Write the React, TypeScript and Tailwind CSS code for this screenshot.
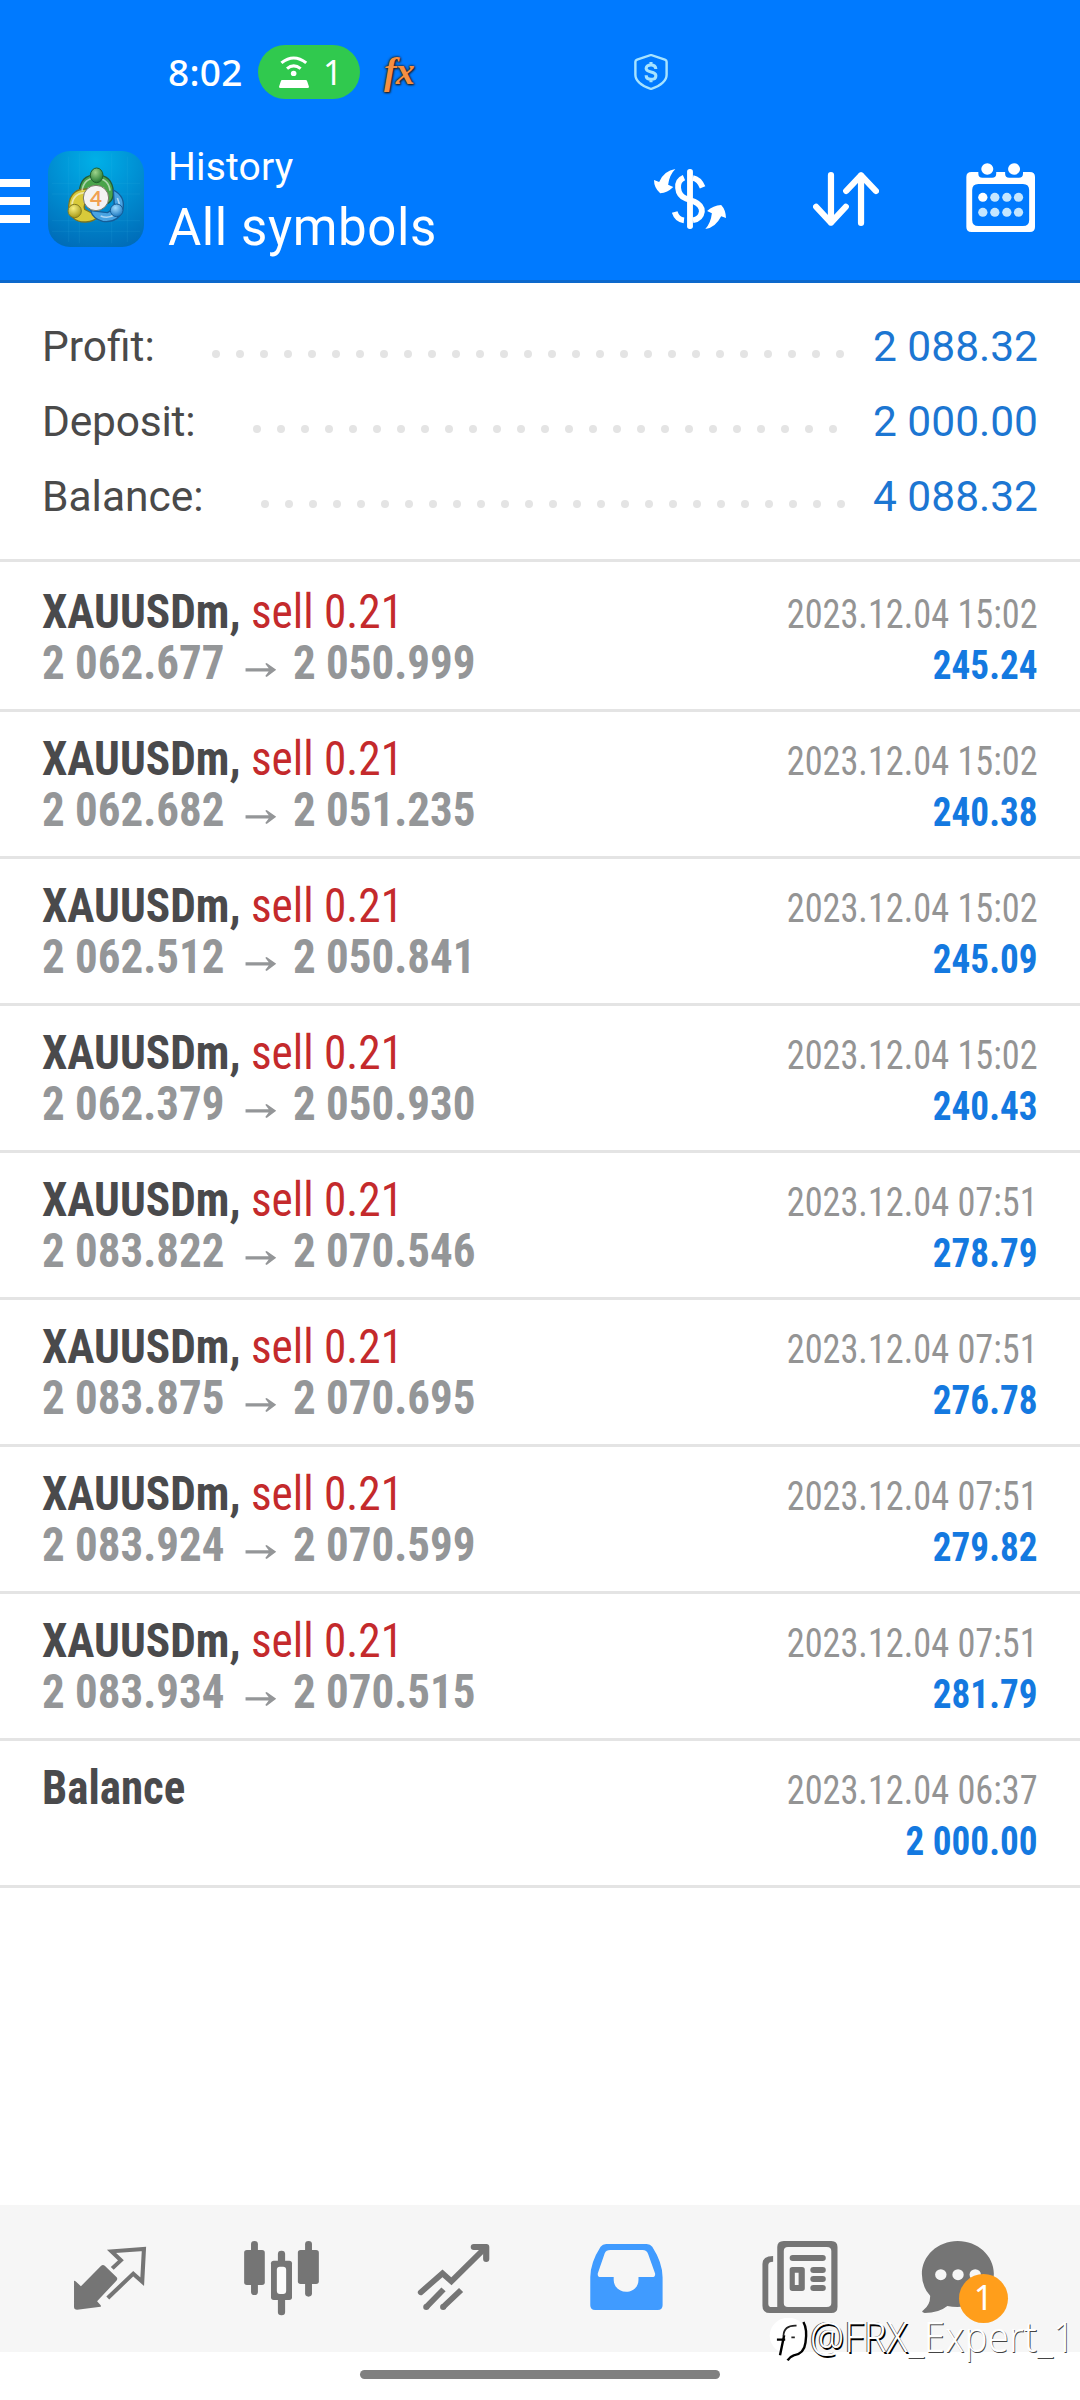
const NAV = ['trade', 'quotes', 'chart', 'history', 'news', 'chat'] as const;

const ROWS = [
  ['2 062.677', '2 050.999', '15:02', '245.24'],
  ['2 062.682', '2 051.235', '15:02', '240.38'],
  ['2 062.512', '2 050.841', '15:02', '245.09'],
  ['2 062.379', '2 050.930', '15:02', '240.43'],
  ['2 083.822', '2 070.546', '07:51', '278.79'],
  ['2 083.875', '2 070.695', '07:51', '276.78'],
  ['2 083.924', '2 070.599', '07:51', '279.82'],
  ['2 083.934', '2 070.515', '07:51', '281.79'],
];

function StatusBar() {
  return (
    <div className="flex h-[145px] items-start text-white">
      <div className="mt-[47px] ml-[168px] w-[90px] font-['Noto_Sans'] text-[37px] leading-[50px] font-medium tracking-[0.3px]">8:02</div>
      <div className="mt-[45px] flex h-[54px] w-[102px] items-center rounded-full bg-[#30c94e] pl-[21px]">
        <svg className="h-[32px] w-[30px]" viewBox="811 75 86 97" preserveAspectRatio="none" fill="none" stroke="white" strokeWidth="9">
          <path d="M818 96Q853 66 889 96M834 113Q853 97 873 113" />
          <circle cx="853" cy="128" r="8" fill="white" stroke="none" />
          <path d="M820 148h67q4 0 5 4l5 16q0 4-4 4h-78q-4 0-4-4l5-16q1-4 4-4z" fill="white" stroke="none" />
        </svg>
        <span className="ml-[14px] font-['Noto_Sans'] text-[34px] leading-[54px]">1</span>
      </div>
      <div className="mt-[51px] ml-[24px] w-[40px] font-['Liberation_Serif'] text-[38px] leading-[40px] font-bold tracking-[-1px] italic text-[#f58f42] [text-shadow:0_0_2px_#222,0_0_3px_#222,1px_1px_2px_#222]">fx</div>
      <svg className="mt-[54px] ml-[210px] h-[36px] w-[34px]" viewBox="273 72 98 108" preserveAspectRatio="none" fill="none" stroke="#a6e3ff" strokeWidth="7">
        <path d="M322 75l40 14q5 2 5 6v39q0 26-45 43q-45-17-45-43V95q0-4 5-6z" />
        <path d="M336 117q-1-12-14-12t-14 10q0 8 14 11t14 11q0 11-14 11t-14-12M322 96v10M322 147v10" strokeWidth="9" />
      </svg>
    </div>
  );
}

function Logo() {
  return (
    <svg className="ml-[18px] h-24 w-24" viewBox="54 63 288 288">
      <defs>
        <radialGradient id="tile" cx="0.5" cy="0.1" r="0.95">
          <stop offset="0" stopColor="#00b0e8" />
          <stop offset="0.5" stopColor="#008ed2" />
          <stop offset="1" stopColor="#006cb8" />
        </radialGradient>
        <radialGradient id="green" cx="0.4" cy="0.3" r="0.7"><stop offset="0" stopColor="#9ed48c" /><stop offset="1" stopColor="#257a32" /></radialGradient>
        <radialGradient id="gold" cx="0.4" cy="0.3" r="0.7"><stop offset="0" stopColor="#f8f080" /><stop offset="1" stopColor="#a89a18" /></radialGradient>
        <radialGradient id="sky" cx="0.4" cy="0.3" r="0.7"><stop offset="0" stopColor="#9fdcff" /><stop offset="1" stopColor="#1d78c0" /></radialGradient>
      </defs>
      <rect x="54" y="63" width="288" height="288" rx="66" fill="url(#tile)" />
      <path d="M66 160h264M66 192h264M66 272h264M66 304h264M116 80v256M148 70v270M245 70v270M292 80v256" stroke="#4cc4f0" strokeOpacity="0.16" strokeWidth="2" />
      <g stroke="#245c38" strokeWidth="4">
        <path d="M148 186q2-50 50-52q50 2 52 52q0 26-16 34l-14-36q-22-24-44-6z" fill="#4aa34a" />
        <path d="M182 178q-62-8-66 50q4 50 52 48q24-2 38-16l-42-22q-6-18 14-28z" fill="#d9ca3a" stroke="#7a7420" />
        <path d="M250 180q38 20 28 60q-14 40-60 34q-30-8-36-32l50 6q26-12 20-36z" fill="#48a3e2" stroke="#155d98" />
      </g>
      <path d="M156 182q6-38 42-38q38 2 42 38M126 224q4-36 44-36M262 204q14 28-6 48q-20 16-44 6" fill="none" stroke="white" strokeOpacity="0.55" strokeWidth="5" />
      <circle cx="198" cy="204" r="38" fill="#f4f2f2" stroke="#776" strokeWidth="3" />
      <ellipse cx="200" cy="136" rx="19" ry="22" fill="url(#green)" stroke="#20602c" strokeWidth="3" />
      <circle cx="134" cy="243" r="20" fill="url(#gold)" stroke="#847c20" strokeWidth="3" />
      <circle cx="260" cy="241" r="19" fill="url(#sky)" stroke="#155d98" strokeWidth="3" />
      <text x="198" y="227" textAnchor="middle" fontFamily="Lato" fontWeight="700" fontSize="62" fill="#f0a050">4</text>
    </svg>
  );
}

function Toolbar() {
  return (
    <div className="flex h-[138px] items-start border-b-[3px] border-[#0c68cc] text-white">
      <div className="mt-[34px] flex w-[30px] flex-col gap-[10px]">
        <div className="h-2 bg-white" />
        <div className="h-2 bg-white" />
        <div className="h-2 bg-white" />
      </div>
      <div className="mt-[6px] w-[138px]"><Logo /></div>
      <div className="w-[486px]">
        <div className="mt-[-1px] text-[39px] leading-[46px] tracking-[0.2px]">History</div>
        <div className="mt-[8px] text-[51px] leading-[60px] tracking-[0.6px]">All symbols</div>
      </div>
      <svg className="mt-[24px] h-[60px] w-[72px]" viewBox="331 417 209 180" preserveAspectRatio="none" fill="white">
        <rect x="427" y="417" width="17" height="180" rx="8" />
        <path d="M418 443Q399 451 401 474Q403 498 424 506L448 515Q471 526 470 545Q467 567 444 571M444 444Q462 447 472 472M391 546Q398 569 418 571" fill="none" stroke="white" strokeWidth="17" />
        <path d="M393 417Q360 422 346 456L331 450Q331 474 349 490Q370 488 387 471L372 464Q376 434 393 417zM480 597Q509 594 526 559L540 564Q539 539 526 525Q503 527 485 543L499 550Q496 579 480 597z" />
      </svg>
      <svg className="mt-[27px] ml-[87px] h-[54px] w-[66px]" viewBox="793 426 191 162" preserveAspectRatio="none" fill="none" stroke="white" strokeWidth="18" strokeLinecap="round" strokeLinejoin="round">
        <path d="M845 435V578M802 530l43 48 43-48M932 579V436M889 483l43-47 43 47" />
      </svg>
      <svg className="mt-[18px] ml-[87px] h-[69px] w-[69px]" viewBox="1236 399 201 207" preserveAspectRatio="none" fill="white">
        <path fillRule="evenodd" d="M1252 426h20v5q0 12 12 12h28q12 0 12-12v-5h26v5q0 12 12 12h28q12 0 12-12v-5h20q15 0 15 15v150q0 15-15 15h-170q-15 0-15-15V441q0-15 15-15zM1272 462q-18 0-18 18v90q0 18 18 18h130q18 0 18-18v-90q0-18-18-18z" />
        <circle cx="1298" cy="417" r="17.500" /><circle cx="1376" cy="417" r="17.500" />
        <circle cx="1285" cy="502" r="13.500" />
        <g fill="#c4e6ff">
          <circle cx="1320" cy="502" r="13.500" /><circle cx="1355" cy="502" r="13.500" /><circle cx="1389" cy="502" r="13.500" />
          <circle cx="1285" cy="547" r="13.500" /><circle cx="1320" cy="547" r="13.500" /><circle cx="1355" cy="547" r="13.500" /><circle cx="1389" cy="547" r="13.500" />
        </g>
      </svg>
    </div>
  );
}

function Dots({ count }: { count: number }) {
  return (
    <div className="mt-[14px] flex gap-4">
      {Array.from({ length: count }, (_, i) => <span key={i} className="size-2 rounded-full bg-[#e4e4e4]" />)}
    </div>
  );
}

function Summary() {
  return (
    <div className="h-[279px] border-b-[3px] border-[#e4e4e4] pt-[26px] text-[42.5px] text-[#4a4a4a]">
      <div className="flex h-[75px] items-center px-[42px]"><span className="w-[170px]">Profit:</span><Dots count={27} /><span className="ml-auto text-[#1c76d2]">2 088.32</span></div>
      <div className="flex h-[75px] items-center px-[42px]"><span className="w-[211px] tracking-[-0.2px]">Deposit:</span><Dots count={25} /><span className="ml-auto text-[#1c76d2]">2 000.00</span></div>
      <div className="flex h-[75px] items-center px-[42px]"><span className="w-[219px]">Balance:</span><Dots count={25} /><span className="ml-auto text-[#1c76d2]">4 088.32</span></div>
    </div>
  );
}

function Arrow() {
  return (
    <svg className="mt-[26px] mr-[18px] ml-[22px] h-[14px] w-[33px]" viewBox="710 311 90 40" preserveAspectRatio="none">
      <path d="M710 326h68l-10-13 4-2 28 19-28 21-4-3 10-13h-68z" fill="#949698" />
    </svg>
  );
}

function Stamp({ time, value }: { time: string; value: string }) {
  return (
    <div className="pt-[3px] text-right text-[40px] leading-[51px]">
      <div className="origin-right scale-x-[0.907] text-[#949494]">2023.12.04 {time}</div>
      <div className="origin-right scale-x-[0.93] font-bold text-[#1479e0]">{value}</div>
    </div>
  );
}

function Deal({ row }: { row: string[] }) {
  return (
    <div className="flex h-[147px] justify-between border-b-[3px] border-[#e4e4e4] px-[42px] pt-[21px] font-stretch-condensed">
      <div className="text-[48px] leading-[51px] whitespace-pre">
        <div className="origin-left scale-x-[0.944] text-[#c42a2c]"><b className="text-[#4a4a4c]">XAUUSDm,</b> sell 0.21</div>
        <div className="flex origin-left scale-x-[0.937] font-bold text-[#949698]">{row[0]}<Arrow />{row[1]}</div>
      </div>
      <Stamp time={row[2]} value={row[3]} />
    </div>
  );
}

function NavIcon({ name }: { name: (typeof NAV)[number] }) {
  const cls = 'h-[147px] w-[172px]';
  const g = '#757575';
  switch (name) {
    case 'trade':
      return (
        <svg className={cls} viewBox="69.7 45 499.5 441" preserveAspectRatio="none" fill="none" stroke={g} strokeWidth="12">
          <path d="M215 272q3 0 6 3l14 14 58-61q6-6 12 0l33 33q5 5 0 11l-56 62 9 10q4 4 1 6l-68 9q-9 0-9-8z" fill={g} stroke="none" />
          <path d="M326 235l25-24-27-27 94-7-5 98-26-24-74 73" />
        </svg>
      );
    case 'quotes':
      return (
        <svg className={cls} viewBox="569.2 45 499.500 441" preserveAspectRatio="none" fill={g}>
          <rect x="729" y="153" width="20" height="162" rx="10" /><rect x="709" y="180" width="60" height="105" rx="8" />
          <rect x="886" y="153" width="20" height="167" rx="10" /><rect x="865" y="180" width="61" height="102" rx="8" />
          <rect x="807" y="182" width="21" height="194" rx="10" /><rect x="787" y="212" width="61" height="118" rx="8" />
          <rect x="804" y="230" width="27" height="82" rx="9" fill="#fbfbfb" />
        </svg>
      );
    case 'chart':
      return (
        <svg className={cls} viewBox="1068.7 45 499.500 441" preserveAspectRatio="none" fill="none" stroke={g} strokeWidth="17">
          <path d="M1222 307l63-57 26 24 100-102" strokeLinecap="round" />
          <path d="M1376 171h36v36" strokeWidth="18" strokeLinecap="round" strokeLinejoin="round" />
          <path d="M1288 298l-50 53M1339 300l-53 52" /><circle cx="1238" cy="351" r="9" fill={g} stroke="none" /><circle cx="1287" cy="351" r="9" fill={g} stroke="none" />
        </svg>
      );
    case 'history':
      return (
        <svg className={cls} viewBox="0 45 499.500 441" preserveAspectRatio="none" fill="#409bff">
          <path fillRule="evenodd" d="M192 162h118q10 0 16 8 30 48 30 92v84q0 14-14 14H160q-14 0-14-14v-84q0-44 30-92 6-8 16-8zM204 180q-12 0-16 10l-20 60q-2 11 8 11h38v9c2 47 71 47 72 0v-9h40q10 0 8-11l-20-58q-4-12-16-12z" />
        </svg>
      );
    case 'news':
      return (
        <svg className={cls} viewBox="499.5 45 499.500 441" preserveAspectRatio="none" fill={g}>
          <path fillRule="evenodd" d="M708 153h138q18 0 18 18v179q0 19-18 19H668q-22 0-22-22V222q0-24 31-24v17q-14 0-14 10v116q0 10 10 10h16V171q0-18 19-18zM720 171q-12 0-12 12v156q0 12 12 12h113q13 0 13-12V183q0-12-13-12z" />
          <rect x="725" y="195" width="105" height="18" rx="9" />
          <path fillRule="evenodd" d="M733 231h28q8 0 8 8v56q0 8-8 8h-28q-8 0-8-8v-56q0-8 8-8zM740 248v37h11v-37z" />
          <rect x="785" y="231" width="45" height="18" rx="9" /><rect x="785" y="258" width="45" height="18" rx="9" /><rect x="785" y="285" width="45" height="18" rx="9" />
        </svg>
      );
    case 'chat':
      return (
        <div className="relative">
          <svg className={cls} viewBox="999 45 499.500 441" preserveAspectRatio="none" fill={g}>
            <path d="M1213 153c58 0 105 44 105 98s-47 100-105 100q-17 0-30-3-25 21-66 21-12-3-4-8 21-17 20-44-24-26-24-65c0-54 46-99 104-99z" />
            <g fill="#f6f6f6"><circle cx="1164" cy="254" r="16.500" /><circle cx="1214" cy="254" r="16.500" /><circle cx="1264" cy="254" r="16.500" /></g>
          </svg>
          <div className="absolute top-[68.500px] left-[75px] size-[49px] rounded-full bg-[#ff9e1b] text-center font-['Noto_Sans'] text-[34px] leading-[47px] text-white">1</div>
        </div>
      );
  }
}

function Watermark() {
  return (
    <div className="absolute top-[2318px] left-[769px] flex h-[44px] w-[303px] items-start text-white">
      <svg className="h-[44px] w-[42px] shrink-0" viewBox="665 390 122 132" preserveAspectRatio="none" fill="none">
        <circle cx="721" cy="443" r="54" fill="white" />
        <path d="M697 502l12-60M688 455h24M765 402q12 22 6 62-4 34-34 38-12 4-18 15" stroke="black" strokeWidth="7" />
        <path d="M707 445q0-34 38-32M730 448h10" stroke="#222" strokeWidth="5" />
      </svg>
      <div className="ml-[-1px] origin-left scale-x-[0.915] font-['Noto_Sans'] text-[42px] leading-[36px] font-light whitespace-pre">
        <span className="[text-shadow:1.5px_1.5px_0_#000,-1px_0_0_#444]">@FRX</span>
        <span className="[text-shadow:1px_1px_0_#444]">_Expert_1</span>
      </div>
    </div>
  );
}

export default function App() {
  return (
    <div className="relative h-[2400px] w-[1080px] overflow-hidden bg-white font-[Roboto]">
      <header className="h-[283px] bg-[#007aff]">
        <StatusBar />
        <Toolbar />
      </header>
      <Summary />
      <main className="h-[1643px] pt-[3px]">
        {ROWS.map((r) => <Deal key={r[0]} row={r} />)}
        <div className="flex h-[147px] justify-between border-b-[3px] border-[#e4e4e4] px-[42px] pt-[21px] font-stretch-condensed">
          <div className="origin-left scale-x-[0.937] text-[48px] leading-[51px] font-bold text-[#4a4a4c]">Balance</div>
          <Stamp time="06:37" value="2 000.00" />
        </div>
      </main>
      <nav className="flex h-[147px] bg-[#f6f6f6] px-6">
        {NAV.map((n) => <NavIcon key={n} name={n} />)}
      </nav>
      <div className="mx-auto mt-[18px] h-[9px] w-[360px] rounded-full bg-[#808080]" />
      <Watermark />
    </div>
  );
}
